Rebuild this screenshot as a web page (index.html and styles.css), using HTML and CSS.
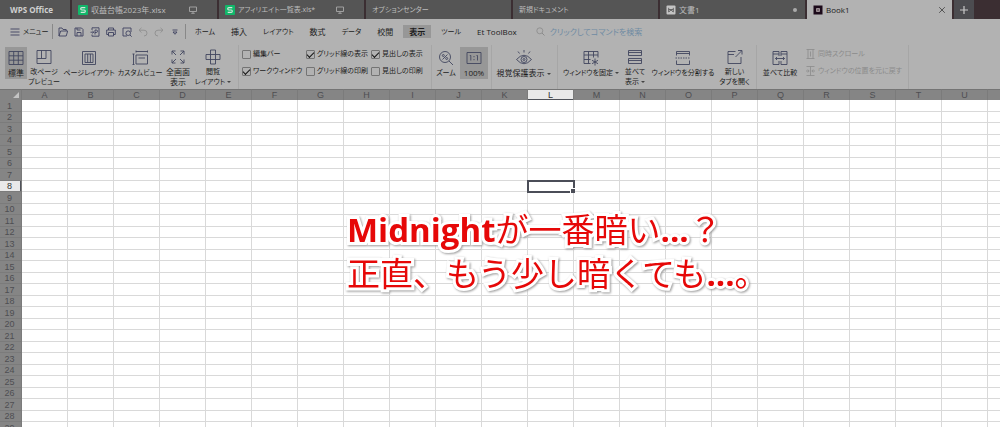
FILE: index.html
```html
<!DOCTYPE html>
<html lang="ja">
<head>
<meta charset="utf-8">
<title>Book1 - WPS Office</title>
<link rel="stylesheet" href="styles.css">
</head>
<body>
<header class="tabs">
  <button class="tab home">WPS Office</button>
  <button class="tab"><svg class="logo" viewBox="0 0 10 10"><rect width="10" height="10" rx="1" fill="#12b76a"/><path d="M7.3 2.6H3.9Q2.7 2.6 2.7 3.8T3.9 5H6.2Q7.3 5 7.3 6.2T6.2 7.4H2.7" fill="none" stroke="#d5e5dc" stroke-width="1.2"/></svg><span>収益台帳2023年.xlsx</span><svg class="screen" viewBox="0 0 8 8"><path d="M.5 1h7v4.5h-7zM4 5.5V7.2M2.3 7.3h3.4" fill="none" stroke="#a0a0a0"/></svg></button>
  <button class="tab kana"><svg class="logo" viewBox="0 0 10 10"><rect width="10" height="10" rx="1" fill="#12b76a"/><path d="M7.3 2.6H3.9Q2.7 2.6 2.7 3.8T3.9 5H6.2Q7.3 5 7.3 6.2T6.2 7.4H2.7" fill="none" stroke="#d5e5dc" stroke-width="1.2"/></svg><span>アフィリエイト一覧表.xls*</span><svg class="screen" viewBox="0 0 8 8"><path d="M.5 1h7v4.5h-7zM4 5.5V7.2M2.3 7.3h3.4" fill="none" stroke="#a0a0a0"/></svg></button>
  <button class="tab kana"><span>オプションセンター</span></button>
  <button class="tab kana"><span>新規ドキュメント</span></button>
  <button class="tab"><svg class="logo" viewBox="0 0 10 10"><rect x=".5" y=".5" width="9" height="9" rx="1" fill="#c4c4c4"/><path d="M2.7 2.8V7L5 5l2.300 2V2.800M2.700 4.500h4.600" fill="none" stroke="#5a5a5a" stroke-width=".9"/></svg><span>文書1</span><i class="dot"></i></button>
  <button class="tab active"><svg class="logo" viewBox="0 0 10 10"><rect x=".5" y=".5" width="9" height="9" fill="#1c0a1a"/><path d="M3.500 3.500h3v3h-3z" fill="#77686f" stroke="#b0a4a8" stroke-width=".8"/></svg><span>Book1</span><svg class="close" viewBox="0 0 8 8"><path d="M1.200 1.200l5.600 5.600M6.800 1.200l-5.600 5.600" stroke="#555" fill="none"/></svg></button>
  <button class="add" aria-label="新しいタブ"><svg width="8" height="8" viewBox="0 0 8 8"><path d="M4 0v8M0 4h8" stroke="#c8c8c8" stroke-width="1.200"/></svg></button>
</header>

<nav class="menu">
  <button class="file kana"><svg width="10" height="10" viewBox="0 0 10 10"><path d="M.5 2h9M.5 5h9M.5 8h9" stroke="#3e4260" stroke-width=".9"/></svg>メニュー</button>
  <div class="quick">
    <button aria-label="開く"><svg viewBox="0 0 10 10"><path d="M1 9V1h3l1 1.500h3.200V4M1 9l1.700-5h7L8.200 9z"/></svg></button>
    <button aria-label="保存"><svg viewBox="0 0 10 10"><path d="M1 1h6.500L9 2.500V9H1zM3 9V5.500h4V9M3 1v2h3.500"/></svg></button>
    <button aria-label="PDF"><svg viewBox="0 0 10 10"><path d="M2 3V.8h7v8.400H2V7.500M.5 5.200h3M2.500 4l1.300 1.200-1.300 1.300M5 7.500V3h1.200q1.300 0 1.300 1.200T6.200 5.500H5"/></svg></button>
    <button aria-label="印刷"><svg viewBox="0 0 10 10"><path d="M2.500 3V1h5v2M2.500 7.500H.7V3h8.600v4.500H7.500M2.500 5.500h5V9h-5z"/></svg></button>
    <button aria-label="印刷プレビュー"><svg viewBox="0 0 10 10"><path d="M9 5V1H1v8h4M8 8l1.700 1.700"/><circle cx="6.200" cy="6.200" r="2.300"/></svg></button>
    <button class="faint" aria-label="元に戻す"><svg viewBox="0 0 10 10"><path d="M3.500.8L1 3.200l2.500 2.400M1 3.200h5q3 0 3 2.900T6 9"/></svg></button>
    <button class="faint" aria-label="やり直し"><svg viewBox="0 0 10 10"><path d="M6.500.8L9 3.200 6.500 5.600M9 3.200H4q-3 0-3 2.900T4 9"/></svg></button>
    <button aria-label="カスタマイズ"><svg viewBox="0 0 10 10"><path d="M2.500 3h5M3 5h4L5 7.300z"/></svg></button>
  </div>
  <div class="pages">
    <button class="kana">ホーム</button><button>挿入</button><button class="kana">レイアウト</button><button>数式</button><button class="kana">データ</button><button>校閲</button><button class="on">表示</button><button class="kana">ツール</button><button>Et ToolBox</button>
  </div>
  <label class="search"><svg width="9" height="9" viewBox="0 0 9 9"><path d="M6 6l2.500 2.500" stroke="#8a8a8a"/><circle cx="3.800" cy="3.800" r="3" stroke="#8a8a8a" fill="none" stroke-width=".8"/></svg><input type="text" placeholder="クリックしてコマンドを検索" aria-label="コマンドを検索"></label>
</nav>

<section class="ribbon">
  <div class="group views">
    <button class="tool on"><svg viewBox="0 0 16 16"><path d="M1 1.500h14v13H1zM1 5.800h14M1 10.200h14M5.700 1.500v13M10.300 1.500v13"/></svg>標準</button>
    <button class="tool kana"><svg viewBox="0 0 16 16"><path d="M1 1.500h14v13H1zM5.500 1.500v8M1 9.500h9v-8"/></svg>改ページ<br>プレビュー</button>
    <button class="tool kana"><svg viewBox="0 0 16 16"><path d="M1.500 1.500h13v13h-13zM4 4h8v8.500H4zM6.700 4v8.500M9.400 4v8.500"/></svg>ページレイアウト</button>
    <button class="tool kana"><svg viewBox="0 0 16 16"><path d="M1.500 4v10.500M.5 4h2M.5 14.500h2M4 1.500h11.500M4 .5v2M15.500.5v2M4 5h11.500v9H4zM6.500 8h6.500"/></svg>カスタムビュー</button>
    <button class="tool"><svg viewBox="0 0 16 16"><path d="M2 5.500V2h3.500M2 2l4 4M10.500 2H14v3.500M14 2l-4 4M2 10.500V14h3.500M2 14l4-4M10.500 14H14v-3.500M14 14l-4-4"/></svg>全画面<br>表示</button>
    <button class="tool kana"><svg viewBox="0 0 16 16"><path d="M5.500 1h5v14h-5zM1 5.500h14v5H1z"/></svg>閲覧<br>レイアウト<i class="arrow"></i></button>
  </div>
  <div class="group checks kana">
    <label><input type="checkbox">編集バー</label>
    <label><input type="checkbox" checked>グリッド線の表示</label>
    <label><input type="checkbox" checked>見出しの表示</label>
    <label><input type="checkbox" checked>ワークウィンドウ</label>
    <label><input type="checkbox">グリッド線の印刷</label>
    <label><input type="checkbox">見出しの印刷</label>
  </div>
  <div class="group zoom">
    <button class="tool kana"><svg viewBox="0 0 16 16"><circle cx="7" cy="7" r="5.500"/><path d="M11 11l4 4M9.500 4.500l-5 5"/><circle cx="5.300" cy="5.500" r="1"/><circle cx="8.700" cy="8.500" r="1"/></svg>ズーム</button>
    <button class="tool on"><svg viewBox="0 0 16 16"><path d="M1 2.500h14v11H1zM3.800 5.500h1v5M10.500 5.500h1v5M8 6v1.200M8 9v1.200"/></svg>100%</button>
  </div>
  <div class="group eye">
    <button class="tool"><svg viewBox="0 0 16 16"><path d="M.5 9.500q7.500-8.500 15 0-7.500 8.500-15 0M8 0v2.500M2 1.500l1.500 2M14 1.500l-1.500 2"/><circle cx="8" cy="9.500" r="3"/><circle cx="8" cy="9.500" r="1"/></svg>視覚保護表示<i class="arrow"></i></button>
  </div>
  <div class="group windows kana">
    <button class="tool"><svg viewBox="0 0 16 16"><path d="M7.500 13.500H1v-12h14v6M1 5h14M5.500 1.500v12M10.500 1.500v6M1 9.500h6.500M12 8.500v7M9 10.300l6 3.400M15 10.300l-6 3.400"/></svg>ウィンドウを固定<i class="arrow"></i></button>
    <button class="tool"><svg viewBox="0 0 16 16"><path d="M1.500 1.500h13v5h-13zM1.500 9.500h13v5h-13zM1.500 3.500h13M1.500 11.500h13"/></svg>並べて<br>表示<i class="arrow"></i></button>
    <button class="tool"><svg viewBox="0 0 16 16"><path d="M1.500 5.500v-4h13v4M1.500 3.500h13M1.500 10.500v4h13v-4"/><path d="M.5 8h15" stroke-dasharray="1.500 1"/></svg>ウィンドウを分割する</button>
    <button class="tool"><svg viewBox="0 0 16 16"><path d="M8.500 2.500H1v12h13V8M1 5.500h6M8.500 8l6-6M11 1.500h4v4"/></svg>新しい<br>タブを開く</button>
  </div>
  <div class="group compare kana">
    <button class="tool"><svg viewBox="0 0 16 16"><path d="M7 6V1.500H1v13h6V11M9 6V1.500h6v13H9V11M1 4h6M9 4h6M3.500 8.500h9M5 7L3.500 8.500 5 10M11 7l1.500 1.500L11 10"/></svg>並べて比較</button>
    <div class="stack">
      <button disabled><svg viewBox="0 0 9 10"><path d="M.5.5h8M.5 9.500h8M2 .5v9M4.500 2.500v5M7 .5v9"/></svg>同時スクロール</button>
      <button disabled><svg viewBox="0 0 9 10"><path d="M.5.500h8M.5 9.500h8M4.500 .5v9M0 5h3M6 5h3M1.800 3.500L3.200 5 1.800 6.500M7.200 3.500L5.800 5l1.400 1.500"/></svg>ウィンドウの位置を元に戻す</button>
    </div>
  </div>
</section>

<main class="sheet">
  <table id="grid" aria-label="Book1"></table>
  <p class="note"><b>Midnight</b>が一番暗い<b>...</b>？<br>正直、もう少し暗くても<b>...</b>。</p>
</main>
<script src="grid.js"></script>
</body>
</html>
```
FILE: grid.js
```js
const letters = [..."ABCDEFGHIJKLMNOPQRSTU", ""];
const activeCol = "L";
const activeRow = 8;
const grid = document.getElementById("grid");

const head = grid.createTHead().insertRow();
head.innerHTML = '<th class="corner"></th>' + letters
  .map(c => `<th scope="col"${c === activeCol ? ' class="current"' : ""}>${c}</th>`).join("");

const body = grid.createTBody();
for (let r = 1; r <= 29; r++) {
  const row = body.insertRow();
  row.innerHTML = `<th scope="row"${r === activeRow ? ' class="current"' : ""}>${r}</th>` + letters
    .map(c => `<td${r === activeRow && c === activeCol ? ' class="selected"' : ""}></td>`).join("");
}
```
FILE: styles.css
```css
* { box-sizing: border-box; }
body {
  margin: 0;
  height: 100vh;
  display: flex;
  flex-direction: column;
  overflow: hidden;
  background: #b2b2b2;
  color: #1c1c1c;
  font: 8px/10px "Open Sans", "Noto Sans CJK JP", sans-serif;
  font-feature-settings: "palt";
}
button, input { font: inherit; font-feature-settings: inherit; color: inherit; border: 0; padding: 0; margin: 0; background: none; }
button { white-space: nowrap; }
svg { flex: none; }
.kana { font-size: 7px; }

.tabs { display: flex; gap: 2px; height: 19px; flex: none; background: #3b2e32; }
.tab { flex: 0 1 145px; display: flex; align-items: center; gap: 3px; padding: 0 6px; background: #555; color: #bdbdbd; overflow: hidden; }
.home { flex: none; width: 70px; padding-left: 10px; font-weight: 700; color: #d0d0d0; }
.logo { width: 10px; height: 10px; }
.screen { width: 8px; height: 8px; margin-left: auto; margin-right: 14px; }
.dot { width: 4px; height: 4px; border-radius: 50%; background: #aaa; margin-left: auto; margin-right: 2px; }
.active { background: #b2b2b2; color: #1c1c1c; }
.close { width: 8px; height: 8px; margin-left: auto; }
.add { width: 20px; background: #4c4c50; display: flex; align-items: center; justify-content: center; }

.menu { display: flex; align-items: center; height: 25px; flex: none; padding-left: 10px; }
.file { display: flex; align-items: center; gap: 3px; width: 42px; }
.quick { display: flex; align-items: center; gap: 6px; height: 15px; padding: 0 5px; border: solid #888; border-width: 0 1px; }
.quick button { display: flex; }
.quick svg { width: 10px; height: 10px; fill: none; stroke: #3e4260; stroke-width: .9; }
.quick .faint svg { stroke: #8e8e8e; }
.pages { display: flex; gap: 4px; margin-left: 3px; }
.pages button { height: 13px; padding: 0 6px; }
.pages .on { background: #979797; font-weight: 700; }
.search { display: flex; align-items: center; gap: 5px; margin-left: 13px; }
.search input { width: 120px; outline: 0; }
.search input::placeholder { color: #6f8ba3; opacity: 1; }

.ribbon { display: flex; flex: none; height: 45px; padding: 1px 0 0 5px; }
.group { display: grid; align-items: start; padding-top: 2px; border-right: 1px solid #a6a6a6; }
.tool { min-height: 32px; padding-top: 2px; margin: 0 -10px; text-align: center; }
.tool svg { display: block; width: 16px; height: 16px; margin: 0 auto 2px; fill: none; stroke: #42465f; stroke-width: .9; }
.tool.on { background: #979797; margin: 0; }
.arrow { display: inline-block; margin-left: 2px; border: 2px solid transparent; border-top-color: #444; border-bottom: 0; vertical-align: middle; }
.views { grid-template-columns: 22px 34px 56px 46px 30px 40px; padding-right: 5px; }
.checks { grid-template-columns: 64px 65px 60px; grid-template-rows: 17px 17px; padding-left: 3px; }
.checks label { display: flex; align-items: center; gap: 2px; height: 14px; white-space: nowrap; }
.checks input { appearance: none; width: 9px; height: 9px; border: 1px solid #747474; border-radius: 1px; display: grid; place-items: center; }
.checks input:checked::after { content: ""; width: 6px; height: 3px; border: solid #151515; border-width: 0 0 1px 1px; transform: rotate(-45deg); }
.zoom { grid-template-columns: 28px 28px; padding-right: 3px; }
.eye { grid-template-columns: 63px; padding-right: 2px; }
.windows { grid-template-columns: 66px 22px 74px 29px; padding-right: 7px; }
.compare { grid-template-columns: 46px 105px; }
.stack { display: grid; grid-template-rows: 17px 17px; padding-left: 3px; }
.stack button { display: flex; align-items: center; gap: 3px; height: 14px; color: #8b8b8b; }
.stack svg { width: 9px; height: 10px; fill: none; stroke: #8b8b8b; stroke-width: .8; }

.sheet { flex: 1; min-height: 0; position: relative; overflow: hidden; background: #fff; }
table { table-layout: fixed; width: 1034px; border-collapse: separate; border-spacing: 0; font: 9px/10px "Liberation Sans", sans-serif; }
th, td { padding: 0; border: 0 solid #d9d9d9; border-width: 0 1px 1px 0; width: 46px; height: 12px; }
tbody tr:nth-child(even) > * { height: 11px; }
th { background: #858585; color: #4e4e52; font-weight: 400; border-color: #7b7b7b; }
thead th { height: 11px; border-top: 1px solid #747474; border-bottom: 0; }
tbody th, .corner { width: 22px; padding-right: 2px; }
.corner { padding: 0; }
.corner::after { content: ""; display: block; margin-left: 13px; width: 6px; height: 6px; background: #c4c4c4; clip-path: polygon(100% 0, 100% 100%, 0 100%); }
.current { background: #e9e9e9; color: #333; }
thead .current { box-shadow: inset 0 -1px #50535a; }
tbody .current { box-shadow: inset -1px 0 #50535a; }
.selected { outline: 2px solid #4b4e58; outline-offset: -1px; position: relative; }
.selected::after { content: ""; position: absolute; right: -2px; bottom: -2px; width: 4px; height: 4px; background: #4b4e58; border: solid #fff; border-width: 1px 0 0 1px; }

.note {
  position: absolute;
  left: 347px;
  top: 119px;
  margin: 0;
  white-space: nowrap;
  color: #e60808;
  font: 500 33px/44px "Open Sans", "Noto Sans CJK JP", sans-serif;
  font-weight: 400;
  font-feature-settings: normal;
  -webkit-text-stroke: 6px #fff;
  paint-order: stroke fill;
  stroke-linejoin: round;
  filter: drop-shadow(1px 1px 1px #999);
}
.note b { font-weight: 700; }
```
